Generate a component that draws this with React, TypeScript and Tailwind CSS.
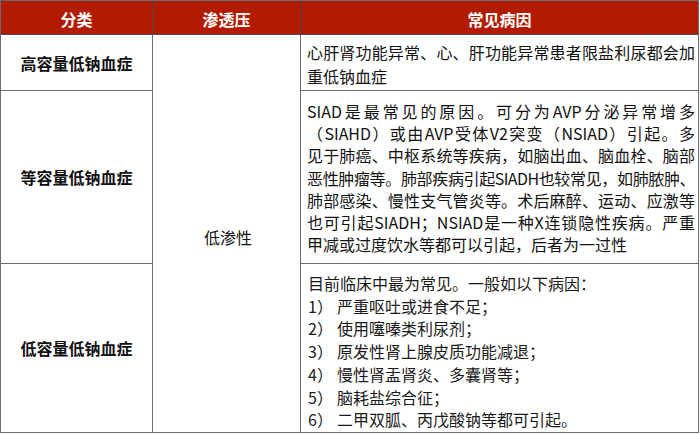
import * as React from "react";

const font = { fontFamily: '"Noto Sans CJK SC", "Noto Sans", sans-serif' };

const siadLines = [
  "SIAD是最常见的原因。可分为AVP分泌异常增多",
  "（SIAHD）或由AVP受体V2突变（NSIAD）引起。多",
  "见于肺癌、中枢系统等疾病，如脑出血、脑血栓、脑部",
  "恶性肿瘤等。肺部疾病引起SIADH也较常见，如肺脓肿、",
  "肺部感染、慢性支气管炎等。术后麻醉、运动、应激等",
  "也可引起SIADH；NSIAD是一种X连锁隐性疾病。严重",
];

const lowCauses = [
  "严重呕吐或进食不足；",
  "使用噻嗪类利尿剂；",
  "原发性肾上腺皮质功能减退；",
  "慢性肾盂肾炎、多囊肾等；",
  "脑耗盐综合征；",
  "二甲双胍、丙戊酸钠等都可引起。",
];

function JustifiedLine({ children, tight }: { children: React.ReactNode; tight?: boolean }) {
  return (
    <div className={tight ? "whitespace-nowrap text-justify tracking-[-0.6px] [text-align-last:justify]" : "whitespace-nowrap text-justify [text-align-last:justify]"}>
      {children}
    </div>
  );
}

export default function App() {
  return (
    <div className="bg-white" style={font}>
      <div className="grid h-[433px] w-[699px] grid-cols-[152px_148px_397px] grid-rows-[34px_56px_173px_168px] border border-[#6a6a6a] text-[16px] text-[#111]">
        <div className="flex items-center justify-center border-r border-b border-[#4a4a4a] bg-[#b31b00] pt-[3px] font-bold text-white">分类</div>
        <div className="flex items-center justify-center border-r border-b border-[#4a4a4a] bg-[#b31b00] pt-[3px] font-bold text-white">渗透压</div>
        <div className="flex items-center justify-center border-b border-[#4a4a4a] bg-[#b31b00] pt-[3px] font-bold text-white">常见病因</div>

        <div className="flex items-center justify-center border-r border-b border-[#6a6a6a] font-bold">高容量低钠血症</div>
        <div className="row-span-3 flex items-center justify-center border-r border-[#6a6a6a] pt-[6px] pl-[3px]">低渗性</div>
        <div className="border-b border-[#6a6a6a] pt-[6px] pr-[3px] pl-[6px] leading-[23.5px]">
          <JustifiedLine>心肝肾功能异常、心、肝功能异常患者限盐利尿都会加</JustifiedLine>
          <div>重低钠血症</div>
        </div>

        <div className="flex items-center justify-center border-r border-b border-[#6a6a6a] font-bold">等容量低钠血症</div>
        <div className="border-b border-[#6a6a6a] pt-[9px] pr-[3px] pl-[6px] leading-[22.2px]">
          {siadLines.map((line) => (
            <JustifiedLine key={line} tight={line.startsWith("恶性")}>
              {line}
            </JustifiedLine>
          ))}
          <div>甲减或过度饮水等都可以引起，后者为一过性</div>
        </div>

        <div className="flex items-center justify-center border-r border-[#6a6a6a] font-bold">低容量低钠血症</div>
        <div className="pt-[8px] pl-[7px] leading-[22.7px] text-[#1a1a1a]">
          <div>目前临床中最为常见。一般如以下病因：</div>
          {lowCauses.map((item, index) => (
            <div key={item} className="flex">
              <span className="w-[29px]">{index + 1}）</span>
              <span>{item}</span>
            </div>
          ))}
        </div>
      </div>
    </div>
  );
}
